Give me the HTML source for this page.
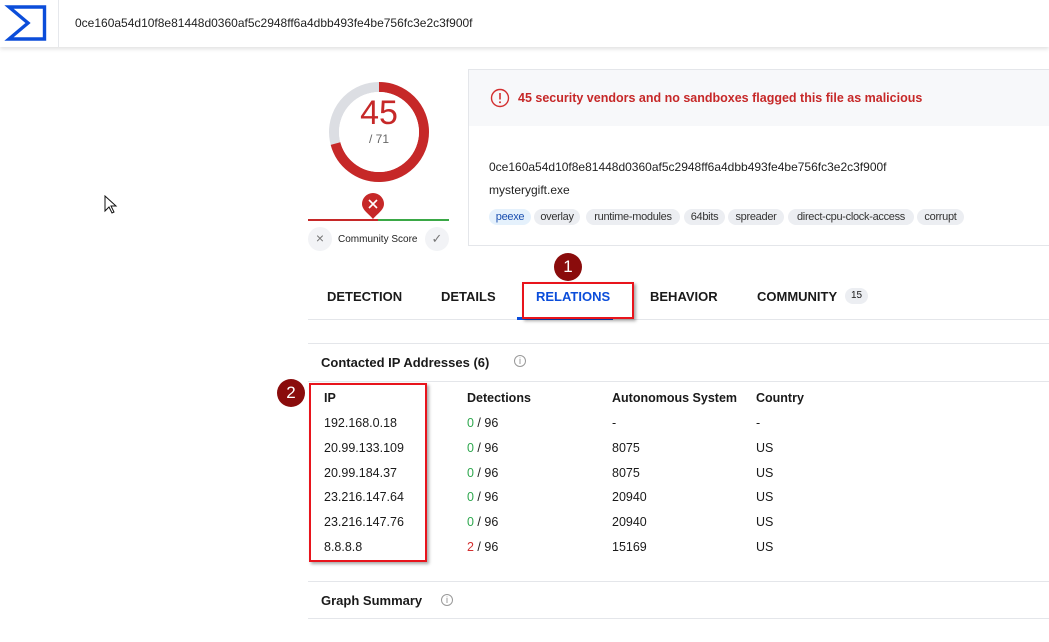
<!DOCTYPE html>
<html><head><style>
*{margin:0;padding:0;box-sizing:border-box}
body{width:1049px;height:642px;background:#fff;font-family:"Liberation Sans",sans-serif;color:#1a1a1a;position:relative;overflow:hidden}
.a{position:absolute;white-space:nowrap}
.hdr{position:absolute;left:0;top:0;width:1049px;height:47px;background:#fff;box-shadow:0 2px 4px rgba(0,0,0,.12)}
.tag{position:absolute;top:209px;height:16px;line-height:16px;font-size:11px;color:#333;background:#eceef2;border-radius:8px;text-align:center;overflow:hidden;letter-spacing:-0.3px}
.tab{position:absolute;top:289px;font-size:13px;font-weight:bold;color:#1a1a1a}
.ln{position:absolute;left:308px;width:741px;height:1px;background:#e4e6ea}
.td{position:absolute;font-size:12.5px;color:#1a1a1a}
.th{position:absolute;font-size:12.5px;font-weight:bold;top:391px}
.g{color:#2fa84f}.r{color:#d32f2f}
.badge{position:absolute;width:28px;height:28px;border-radius:50%;background:#8a0c0c;color:#fff;font-size:17px;text-align:center;line-height:28px}
.box{position:absolute;border:2px solid #e8141c;box-shadow:2px 2px 3px rgba(0,0,0,.35)}
</style></head><body>
<div class="hdr">
<svg class="a" style="left:0;top:0" width="56" height="47" viewBox="0 0 56 47"><path d="M9 7 H44.5 V39 H9 L28 23 Z" fill="none" stroke="#0b4dda" stroke-width="3.4" stroke-linejoin="miter"/></svg>
<div class="a" style="left:58px;top:0;width:1px;height:47px;background:#e6e8ec"></div>
<div class="a" style="left:75px;top:16px;font-size:12px;color:#222">0ce160a54d10f8e81448d0360af5c2948ff6a4dbb493fe4be756fc3e2c3f900f</div>
</div>
<svg class="a" style="left:104px;top:195px" width="16" height="20" viewBox="0 0 16 20"><path d="M1 1 V16 L5 12 L8 18 L10 17 L7 11 H12 Z" fill="#fff" stroke="#111" stroke-width="1"/></svg>
<svg class="a" style="left:324px;top:77px" width="110" height="110" viewBox="0 0 110 110">
<circle cx="55" cy="55" r="45" fill="none" stroke="#dcdee3" stroke-width="10"/>
<circle cx="55" cy="55" r="45" fill="none" stroke="#c62828" stroke-width="10" stroke-dasharray="200 300" transform="rotate(-90 55 55)"/>
<circle cx="55" cy="55" r="40" fill="#fff"/>
</svg>
<div class="a" style="left:349px;top:94px;width:60px;text-align:center;font-size:34px;color:#c62828">45</div>
<div class="a" style="left:354px;top:132px;width:50px;text-align:center;font-size:12px;color:#666">/ 71</div>
<div class="a" style="left:308px;top:219px;width:70px;height:2px;background:#c62828"></div>
<div class="a" style="left:378px;top:219px;width:71px;height:2px;background:#3aa846"></div>
<svg class="a" style="left:361px;top:192px" width="24" height="28" viewBox="0 0 24 28"><path d="M12 27 C8 22 1 18 1 12 A11 11 0 0 1 23 12 C23 18 16 22 12 27Z" fill="#c62828"/><path d="M8 8 L16 16 M16 8 L8 16" stroke="#fff" stroke-width="1.6"/></svg>
<div class="a" style="left:308px;top:227px;width:24px;height:24px;border-radius:50%;background:#f2f3f6;color:#777;font-size:14px;text-align:center;line-height:23px">×</div>
<div class="a" style="left:338px;top:234px;font-size:10px;color:#222">Community Score</div>
<div class="a" style="left:425px;top:227px;width:24px;height:24px;border-radius:50%;background:#f2f3f6;color:#777;font-size:13px;text-align:center;line-height:24px">✓</div>
<div class="a" style="left:468px;top:69px;width:600px;height:177px;border:1px solid #e4e6ea"></div>
<div class="a" style="left:469px;top:70px;width:600px;height:56px;background:#f7f8fa"></div>
<svg class="a" style="left:490px;top:88px" width="20" height="20" viewBox="0 0 20 20"><circle cx="10" cy="10" r="8.5" fill="none" stroke="#d32f2f" stroke-width="1.4"/><path d="M10 5 V11.5" stroke="#d32f2f" stroke-width="1.6"/><circle cx="10" cy="14.3" r="1" fill="#d32f2f"/></svg>
<div class="a" style="left:518px;top:91px;font-size:12.5px;font-weight:bold;color:#c62828">45 security vendors and no sandboxes flagged this file as malicious</div>
<div class="a" style="left:489px;top:160px;font-size:12px;color:#222">0ce160a54d10f8e81448d0360af5c2948ff6a4dbb493fe4be756fc3e2c3f900f</div>
<div class="a" style="left:489px;top:183px;font-size:12px;color:#222">mysterygift.exe</div>
<div class="tag" style="left:489px;width:42px;background:#e5f1fc;color:#1a4fb0">peexe</div>
<div class="tag" style="left:534px;width:46px">overlay</div>
<div class="tag" style="left:586px;width:94px">runtime-modules</div>
<div class="tag" style="left:684px;width:41px">64bits</div>
<div class="tag" style="left:728px;width:56px">spreader</div>
<div class="tag" style="left:788px;width:126px">direct-cpu-clock-access</div>
<div class="tag" style="left:917px;width:47px">corrupt</div>
<div class="tab" style="left:327px">DETECTION</div>
<div class="tab" style="left:441px">DETAILS</div>
<div class="tab" style="left:536px;color:#0b4dda">RELATIONS</div>
<div class="tab" style="left:650px">BEHAVIOR</div>
<div class="tab" style="left:757px">COMMUNITY</div>
<div class="a" style="left:845px;top:288px;width:23px;height:16px;border-radius:8px;background:#eceef2;font-size:10px;text-align:center;line-height:16px">15</div>
<div class="ln" style="top:319px"></div>
<div class="a" style="left:517px;top:317px;width:96px;height:3px;background:#0b4dda"></div>
<div class="box" style="left:522px;top:282px;width:112px;height:37px"></div>
<div class="badge" style="left:554px;top:253px">1</div>
<div class="ln" style="top:343px"></div>
<div class="a" style="left:321px;top:355px;font-size:13px;font-weight:bold">Contacted IP Addresses (6)</div>
<div class="a" style="left:514px;top:355px;width:12px;height:12px;border:1px solid #999;border-radius:50%;font-size:9px;color:#888;text-align:center;line-height:11px">i</div>
<div class="ln" style="top:381px"></div>
<div class="th" style="left:324px">IP</div>
<div class="th" style="left:467px">Detections</div>
<div class="th" style="left:612px">Autonomous System</div>
<div class="th" style="left:756px">Country</div>
<div class="td" style="left:324px;top:416px">192.168.0.18</div><div class="td" style="left:467px;top:416px"><span class="g">0</span> / 96</div><div class="td" style="left:612px;top:416px">-</div><div class="td" style="left:756px;top:416px">-</div>
<div class="td" style="left:324px;top:441px">20.99.133.109</div><div class="td" style="left:467px;top:441px"><span class="g">0</span> / 96</div><div class="td" style="left:612px;top:441px">8075</div><div class="td" style="left:756px;top:441px">US</div>
<div class="td" style="left:324px;top:466px">20.99.184.37</div><div class="td" style="left:467px;top:466px"><span class="g">0</span> / 96</div><div class="td" style="left:612px;top:466px">8075</div><div class="td" style="left:756px;top:466px">US</div>
<div class="td" style="left:324px;top:490px">23.216.147.64</div><div class="td" style="left:467px;top:490px"><span class="g">0</span> / 96</div><div class="td" style="left:612px;top:490px">20940</div><div class="td" style="left:756px;top:490px">US</div>
<div class="td" style="left:324px;top:515px">23.216.147.76</div><div class="td" style="left:467px;top:515px"><span class="g">0</span> / 96</div><div class="td" style="left:612px;top:515px">20940</div><div class="td" style="left:756px;top:515px">US</div>
<div class="td" style="left:324px;top:540px">8.8.8.8</div><div class="td" style="left:467px;top:540px"><span class="r">2</span> / 96</div><div class="td" style="left:612px;top:540px">15169</div><div class="td" style="left:756px;top:540px">US</div>
<div class="box" style="left:309px;top:383px;width:118px;height:179px"></div>
<div class="badge" style="left:277px;top:379px">2</div>
<div class="ln" style="top:581px"></div>
<div class="a" style="left:321px;top:593px;font-size:13px;font-weight:bold">Graph Summary</div>
<div class="a" style="left:441px;top:594px;width:12px;height:12px;border:1px solid #999;border-radius:50%;font-size:9px;color:#888;text-align:center;line-height:11px">i</div>
<div class="ln" style="top:618px"></div>
</body></html>
